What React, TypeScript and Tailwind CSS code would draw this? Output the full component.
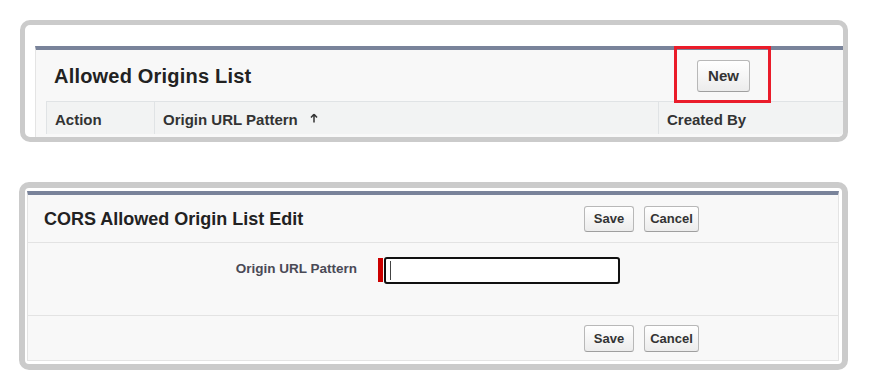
import React from 'react';

function Btn({ label, className = '' }: { label: string; className?: string }) {
  return (
    <button
      className={`flex items-center justify-center rounded-[3px] border border-[#b8b8b8] border-b-[#9f9f9f] bg-gradient-to-b from-white to-[#ececec] font-bold text-[#333] ${className}`}
    >
      {label}
    </button>
  );
}

export default function App() {
  return (
    <div
      className="w-[872px] h-[388px] bg-white overflow-hidden"
      style={{ fontFamily: '"Liberation Sans", Arial, sans-serif' }}
    >
      {/* Allowed origins list */}
      <div className="ml-[20px] mt-[20px] w-[828px] h-[122px] rounded-[10px] border-[5px] border-[#cbcbcb] bg-white overflow-hidden pt-[21px] pl-[10px]">
        <div className="h-full border-t-[4px] border-t-[#79839a] border-l border-l-[#e4e4e4] bg-[#f8f8f8]">
          <div className="h-[51px] flex items-center">
            <h2 className="w-[661px] pl-[18px] text-[20px] font-bold text-[#222] leading-none tracking-[0.2px]">
              Allowed Origins List
            </h2>
            <div className="relative">
              <Btn label="New" className="w-[53px] h-[32px] text-[15px] mt-[1px]" />
              <div className="absolute -left-[23px] -right-[21px] -top-[13px] -bottom-[11px] border-[3px] border-[#ea1c2a]" />
            </div>
          </div>
          <div className="ml-[10px] h-[33px] flex bg-[#f2f3f3] border-t border-l border-[#e0e3e5] text-[15px] font-bold text-[#333]">
            <div className="w-[108px] border-r border-[#e0e3e5] pl-[8px] pt-[7px]">Action</div>
            <div className="w-[504px] border-r border-[#e0e3e5] pl-[8px] pt-[7px] flex items-start">
              Origin URL Pattern
              <svg width="8" height="10" viewBox="0 0 8 10" className="ml-[12px] mt-[4px]">
                <path d="M4 1.2 L1 4.6 M4 1.2 L7 4.6 M4 1.2 V9.5" stroke="#333" strokeWidth="1.5" fill="none" />
              </svg>
            </div>
            <div className="flex-1 pl-[8px] pt-[7px]">Created By</div>
          </div>
        </div>
      </div>

      {/* Edit form */}
      <div className="ml-[19px] mt-[40px] w-[829px] h-[188px] rounded-[10px] border-[6px] border-[#cbcbcb] bg-white overflow-hidden p-[3px] pl-[2px]">
        <div className="h-full border-t-[4px] border-t-[#79839a] border-x border-b border-[#e4e4e4] bg-[#f8f8f8] flex flex-col">
          <div className="h-[48px] flex items-center border-b border-[#e3e3e3]">
            <h2 className="w-[556px] pl-[16px] text-[18px] font-bold text-[#222] leading-none">
              CORS Allowed Origin List Edit
            </h2>
            <div className="flex gap-[10px]">
              <Btn label="Save" className="w-[50px] h-[26px] text-[13px]" />
              <Btn label="Cancel" className="w-[55px] h-[26px] text-[13px]" />
            </div>
          </div>
          <div className="h-[73px] flex items-start pt-[14px] border-b border-[#e3e3e3]">
            <label className="w-[339px] pr-[10px] pt-[2px] text-right text-[13.5px] font-bold text-[#4a4a56]">
              Origin URL Pattern
            </label>
            <div className="ml-[11px] mt-[1px] w-[5px] h-[24px] bg-[#c00]" />
            <div className="ml-px w-[236px] h-[27px] rounded-[3px] border-2 border-[#111] bg-white flex items-center pl-[4px]">
              <div className="w-px h-[19px] bg-[#444]" />
            </div>
          </div>
          <div className="flex-1 flex items-start pt-[9px] pl-[556px] gap-[10px]">
            <Btn label="Save" className="w-[50px] h-[27px] text-[13px]" />
            <Btn label="Cancel" className="w-[55px] h-[27px] text-[13px]" />
          </div>
        </div>
      </div>
    </div>
  );
}
